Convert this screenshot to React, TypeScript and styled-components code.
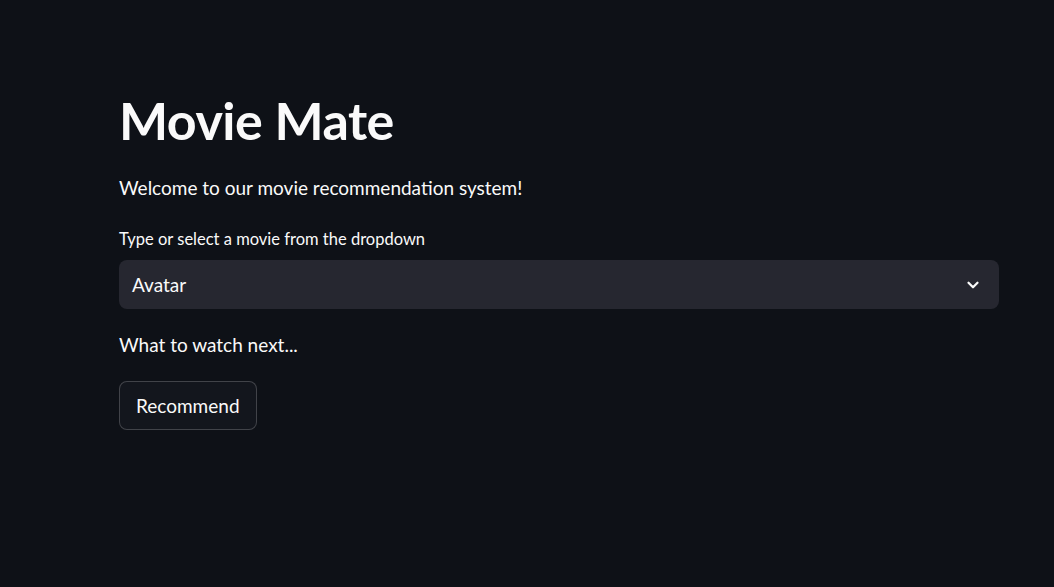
import * as React from 'react'
import styled, { createGlobalStyle } from 'styled-components'

const GlobalStyle = createGlobalStyle`
  html, body {
    margin: 0;
    padding: 0;
    background: #0e1117;
  }
  body {
    font-family: 'Lato', 'Liberation Sans', sans-serif;
    color: #fafafa;
  }
`

export default function App() {
  return (
    <Page>
      <GlobalStyle />
      <Main>
        <Title>Movie Mate</Title>
        <Intro>Welcome to our movie recommendation system!</Intro>
        <Field>
          <Label>Type or select a movie from the dropdown</Label>
          <Select>
            <SelectValue>Avatar</SelectValue>
            <Chevron viewBox="0 0 24 24">
              <path d="M6 9l6 6 6-6" />
            </Chevron>
          </Select>
        </Field>
        <Text>What to watch next...</Text>
        <Button>Recommend</Button>
      </Main>
    </Page>
  )
}

const Page = styled.div`
  min-height: 587px;
  background: #0e1117;
`

const Main = styled.div`
  width: 880px;
  padding: 88px 0 0 119px;
  display: flex;
  flex-direction: column;
  align-items: flex-start;
`

const Title = styled.h1`
  margin: 0;
  font-size: 52px;
  font-weight: 700;
  line-height: 64px;
  letter-spacing: -0.5px;
`

const Intro = styled.p`
  margin: 22px 0 0;
  font-size: 19px;
  line-height: 28px;
`

const Field = styled.div`
  width: 100%;
  margin-top: 26px;
`

const Label = styled.div`
  font-size: 16.5px;
  line-height: 22px;
  margin-bottom: 10px;
`

const Select = styled.div`
  height: 49px;
  border-radius: 8px;
  background: #262730;
  display: flex;
  align-items: center;
  justify-content: space-between;
  padding: 0 17px 0 13px;
`

const SelectValue = styled.span`
  font-size: 19px;
`

const Chevron = styled.svg`
  width: 18px;
  height: 18px;
  fill: none;
  stroke: #fafafa;
  stroke-width: 3;
  stroke-linecap: round;
  stroke-linejoin: round;
`

const Text = styled.p`
  margin: 22px 0 0;
  font-size: 19px;
  line-height: 28px;
`

const Button = styled.button`
  margin-top: 22px;
  height: 49px;
  padding: 0 16px;
  border-radius: 8px;
  border: 1px solid rgba(250, 250, 250, 0.2);
  background: #13161d;
  color: #fafafa;
  font-family: inherit;
  font-size: 19px;
  cursor: pointer;
`
